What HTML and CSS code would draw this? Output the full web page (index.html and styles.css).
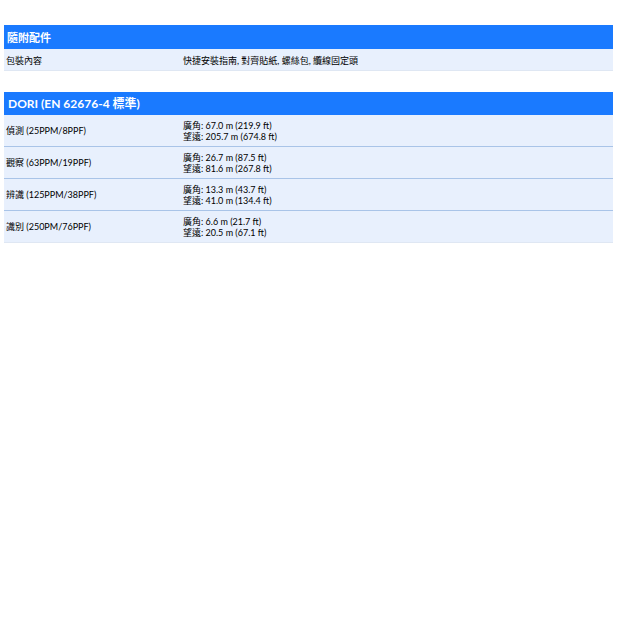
FILE: index.html
```html
<!DOCTYPE html>
<html lang="zh-Hant">
<head>
<meta charset="utf-8">
<link rel="stylesheet" href="styles.css">
</head>
<body>
<div class="page">
  <section class="spec">
    <div class="spec-head">隨附配件</div>
    <div class="row single">
      <div class="label">包裝內容</div>
      <div class="value">快捷安裝指南, 對齊貼紙, 螺絲包, 纜線固定頭</div>
    </div>
  </section>
  <section class="spec">
    <div class="spec-head big">DORI (EN 62676-4 標準)</div>
    <div class="row">
      <div class="label">偵測 (25PPM/8PPF)</div>
      <div class="value">廣角: 67.0 m (219.9 ft)<br>望遠: 205.7 m (674.8 ft)</div>
    </div>
    <div class="row">
      <div class="label">觀察 (63PPM/19PPF)</div>
      <div class="value">廣角: 26.7 m (87.5 ft)<br>望遠: 81.6 m (267.8 ft)</div>
    </div>
    <div class="row">
      <div class="label">辨識 (125PPM/38PPF)</div>
      <div class="value">廣角: 13.3 m (43.7 ft)<br>望遠: 41.0 m (134.4 ft)</div>
    </div>
    <div class="row last">
      <div class="label">識別 (250PM/76PPF)</div>
      <div class="value">廣角: 6.6 m (21.7 ft)<br>望遠: 20.5 m (67.1 ft)</div>
    </div>
  </section>
</div>
</body>
</html>
```
FILE: styles.css
```css
html, body { margin: 0; padding: 0; background: #fff; }
body {
  font-family: "Lato", "Noto Sans CJK TC", sans-serif;
  color: #000;
}
.page {
  padding: 25px 7px 0 4px;
  display: flex;
  flex-direction: column;
  gap: 21px;
}
.spec-head {
  background: #1a7aff;
  color: #fff;
  font-weight: 700;
  font-size: 11px;
  height: 24px;
  line-height: 26px;
  padding-left: 3px;
}
.spec-head.big {
  font-size: 12px;
  height: 23px;
  line-height: 23px;
  padding-left: 4px;
}
.row {
  display: grid;
  grid-template-columns: 179px 1fr;
  background: #e8f0fd;
  border-bottom: 1px solid #a9c4e8;
  height: 31px;
  align-items: center;
  font-size: 9px;
  line-height: 11px;
}
.row.single { height: 21px; border-bottom-color: #dfe7f3; padding-top: 1px; box-sizing: border-box; height: 22px; }
.row.last { border-bottom-color: #dfe7f3; }
.label { padding-left: 2px; }
```
